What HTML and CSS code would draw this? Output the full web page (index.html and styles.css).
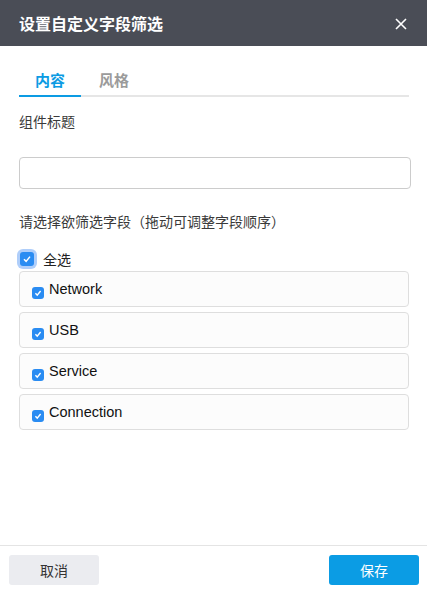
FILE: index.html
```html
<!DOCTYPE html>
<html lang="zh-CN">
<head>
  <meta charset="UTF-8">
  <meta name="viewport" content="width=device-width, initial-scale=1.0">
  <title>设置自定义字段筛选</title>
  <link rel="stylesheet" href="styles.css">
</head>
<body>
  <div class="dialog">
    <div class="dialog-header">
      <span class="dialog-title">设置自定义字段筛选</span>
      <svg class="close" width="12" height="12" viewBox="0 0 12 12">
        <path d="M1 1 L11 11 M11 1 L1 11" stroke="#fff" stroke-width="1.6" fill="none"/>
      </svg>
    </div>

    <div class="dialog-body">
      <div class="tabs">
        <div class="tab active">内容</div>
        <div class="tab">风格</div>
      </div>

      <div class="field-label">组件标题</div>
      <input class="text-input" type="text">

      <div class="field-label hint">请选择欲筛选字段（拖动可调整字段顺序）</div>

      <label class="check-all">
        <span class="box big">
          <svg width="14" height="14" viewBox="0 0 14 14"><path d="M4 7.3 L6.1 9.4 L10 4.6" stroke="#fff" stroke-width="1.5" fill="none"/></svg>
        </span>
        全选
      </label>

      <div class="field-list">
        <div class="field-item">
          <span class="box">
            <svg width="12" height="12" viewBox="0 0 12 12"><path d="M3.4 6.3 L5.2 8.1 L8.6 4" stroke="#fff" stroke-width="1.4" fill="none"/></svg>
          </span>
          <span class="field-name">Network</span>
        </div>
        <div class="field-item">
          <span class="box">
            <svg width="12" height="12" viewBox="0 0 12 12"><path d="M3.4 6.3 L5.2 8.1 L8.6 4" stroke="#fff" stroke-width="1.4" fill="none"/></svg>
          </span>
          <span class="field-name">USB</span>
        </div>
        <div class="field-item">
          <span class="box">
            <svg width="12" height="12" viewBox="0 0 12 12"><path d="M3.4 6.3 L5.2 8.1 L8.6 4" stroke="#fff" stroke-width="1.4" fill="none"/></svg>
          </span>
          <span class="field-name">Service</span>
        </div>
        <div class="field-item">
          <span class="box">
            <svg width="12" height="12" viewBox="0 0 12 12"><path d="M3.4 6.3 L5.2 8.1 L8.6 4" stroke="#fff" stroke-width="1.4" fill="none"/></svg>
          </span>
          <span class="field-name">Connection</span>
        </div>
      </div>
    </div>

    <div class="dialog-footer">
      <button class="btn btn-cancel">取消</button>
      <button class="btn btn-save">保存</button>
    </div>
  </div>
</body>
</html>
```

FILE: styles.css
```css
body {
  margin: 0;
  height: 100vh;
  overflow: hidden;
  background-color: #fff;
  font-family: "Liberation Sans", "Noto Sans CJK SC", sans-serif;
  color: #333;
}

.dialog {
  display: flex;
  flex-direction: column;
  height: 100%;
}

.dialog-header {
  height: 46px;
  flex-shrink: 0;
  display: flex;
  align-items: center;
  justify-content: space-between;
  padding: 0 20px 0 19px;
  background-color: #4a4d56;
}

.dialog-title {
  color: #fff;
  font-size: 16px;
  font-weight: bold;
}

.close {
  margin-top: 1px;
}

.dialog-body {
  flex: 1;
  padding: 0 16px 0 19px;
}

.tabs {
  display: flex;
  margin: 25px 2px 0 0;
  border-bottom: 2px solid #e6e6e6;
}

.tab {
  width: 62px;
  text-align: center;
  font-size: 15px;
  font-weight: bold;
  line-height: 20px;
  padding-bottom: 4px;
  margin-bottom: -2px;
  margin-right: 2px;
  color: #9b9b9b;
  border-bottom: 2px solid transparent;
}

.tab.active {
  color: #0c9be3;
  border-bottom-color: #0c9be3;
}

.field-label {
  font-size: 14px;
  line-height: 20px;
  margin-top: 15px;
  color: #3a3a3a;
}

.text-input {
  display: block;
  box-sizing: border-box;
  width: 100%;
  height: 32px;
  margin-top: 25px;
  border: 1px solid #cccccc;
  border-radius: 4px;
  outline: none;
}

.field-label.hint {
  margin-top: 23px;
}

.check-all {
  display: flex;
  align-items: center;
  gap: 9px;
  margin-top: 17px;
  height: 20px;
  font-size: 14px;
  color: #222;
}

.box {
  display: flex;
  width: 12px;
  height: 12px;
  border-radius: 3px;
  background-color: #2a8cf2;
  flex-shrink: 0;
}

.box.big {
  width: 14px;
  height: 14px;
  margin-left: 1px;
  box-shadow: 0 0 0 3px rgba(110, 165, 245, 0.55);
}

.field-list {
  display: flex;
  flex-direction: column;
  gap: 5px;
  margin: 2px 2px 0 0;
}

.field-item {
  display: flex;
  align-items: center;
  gap: 5px;
  height: 36px;
  box-sizing: border-box;
  padding-left: 12px;
  border: 1px solid #dedede;
  border-radius: 4px;
  background-color: #fcfcfc;
}

.field-item .box {
  margin-top: 7px;
}

.field-name {
  font-size: 14.5px;
  color: #111;
}

.dialog-footer {
  height: 48px;
  flex-shrink: 0;
  display: flex;
  align-items: center;
  justify-content: space-between;
  padding: 0 8px 0 9px;
  border-top: 1px solid #e4e4e4;
}

.btn {
  width: 90px;
  height: 30px;
  border: none;
  border-radius: 3px;
  font-family: "Liberation Sans", "Noto Sans CJK SC", sans-serif;
  font-size: 14px;
  cursor: pointer;
}

.btn-cancel {
  background-color: #ebecf0;
  color: #333;
}

.btn-save {
  background-color: #0b9ce4;
  color: #fff;
}
```
